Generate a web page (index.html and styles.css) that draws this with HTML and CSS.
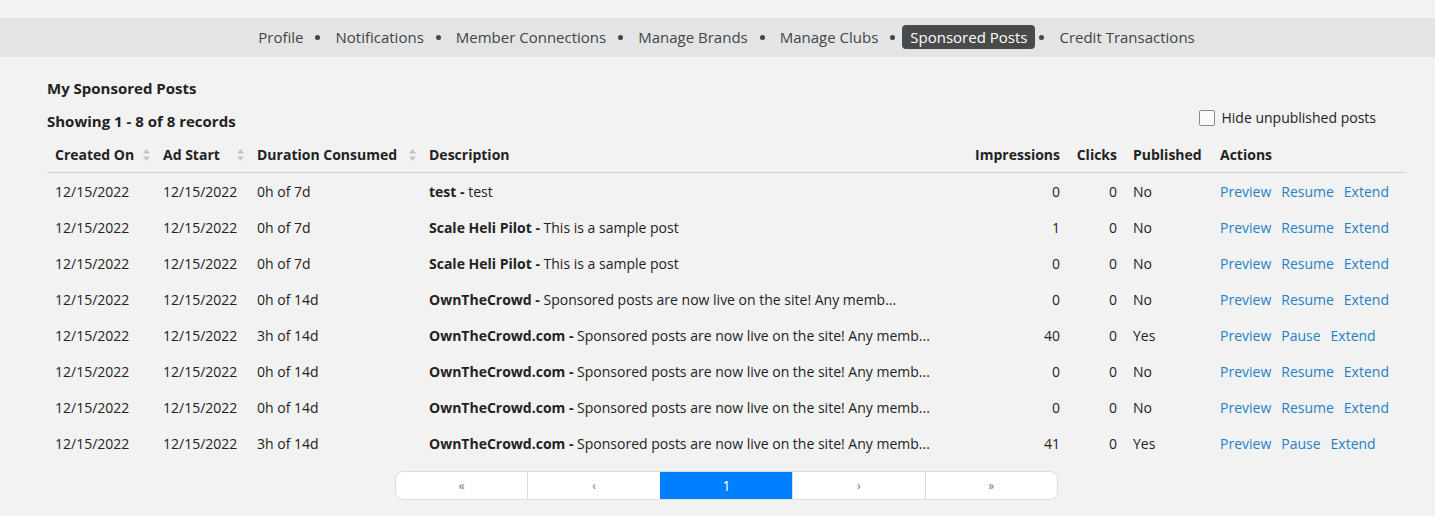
FILE: index.html
```html
<html>
<head>
  <meta charset="UTF-8">
  <title>Sponsored Posts</title>
  <link rel="stylesheet" href="styles.css">
</head>
<body>

  <nav class="subnav">
    <a href="#">Profile</a><span class="dot"></span>
    <a href="#">Notifications</a><span class="dot"></span>
    <a href="#">Member Connections</a><span class="dot"></span>
    <a href="#">Manage Brands</a><span class="dot"></span>
    <a href="#">Manage Clubs</a><span class="dot"></span>
    <a href="#" class="active">Sponsored Posts</a><span class="dot"></span>
    <a href="#">Credit Transactions</a>
  </nav>

  <div class="content">
    <h3>My Sponsored Posts</h3>

    <div class="toolbar">
      <div class="count">Showing 1 - 8 of 8 records</div>
      <label class="hide-toggle"><span class="box"></span>Hide unpublished posts</label>
    </div>

    <table class="posts">
      <colgroup>
        <col style="width:108px"><col style="width:94px"><col style="width:172px"><col style="width:546px">
        <col style="width:101px"><col style="width:57px"><col style="width:87px"><col style="width:193px">
      </colgroup>
      <thead>
        <tr>
          <th class="sortable"><div>Created On <svg width="7" height="12" viewBox="0 0 7 12"><path d="M3.5 0L7 4.5H0z M3.5 12L0 7.5H7z" fill="#c4c4c4"/></svg></div></th>
          <th class="sortable"><div>Ad Start <svg width="7" height="12" viewBox="0 0 7 12"><path d="M3.5 0L7 4.5H0z M3.5 12L0 7.5H7z" fill="#c4c4c4"/></svg></div></th>
          <th class="sortable"><div>Duration Consumed <svg width="7" height="12" viewBox="0 0 7 12"><path d="M3.5 0L7 4.5H0z M3.5 12L0 7.5H7z" fill="#c4c4c4"/></svg></div></th>
          <th>Description</th>
          <th class="num">Impressions</th>
          <th class="num">Clicks</th>
          <th>Published</th>
          <th>Actions</th>
        </tr>
      </thead>
      <tbody id="postsBody"></tbody>
    </table>

    <div class="pager">
      <a href="#">&laquo;</a>
      <a href="#">&lsaquo;</a>
      <a href="#" class="current">1</a>
      <a href="#">&rsaquo;</a>
      <a href="#">&raquo;</a>
    </div>
  </div>

  <script>
    var sample = "Sponsored posts are now live on the site! Any memb...";
    var posts = [
      ["0h of 7d", "test", "test", 0, "No"],
      ["0h of 7d", "Scale Heli Pilot", "This is a sample post", 1, "No"],
      ["0h of 7d", "Scale Heli Pilot", "This is a sample post", 0, "No"],
      ["0h of 14d", "OwnTheCrowd", sample, 0, "No"],
      ["3h of 14d", "OwnTheCrowd.com", sample, 40, "Yes"],
      ["0h of 14d", "OwnTheCrowd.com", sample, 0, "No"],
      ["0h of 14d", "OwnTheCrowd.com", sample, 0, "No"],
      ["3h of 14d", "OwnTheCrowd.com", sample, 41, "Yes"]
    ];
    var body = document.getElementById("postsBody");
    posts.forEach(function (p) {
      var row = document.createElement("tr");
      var toggle = p[4] === "Yes" ? "Pause" : "Resume";
      row.innerHTML = `
        <td>12/15/2022</td>
        <td>12/15/2022</td>
        <td>${p[0]}</td>
        <td class="desc"><b>${p[1]} -</b> ${p[2]}</td>
        <td class="num">${p[3]}</td>
        <td class="num">0</td>
        <td>${p[4]}</td>
        <td class="actions"><a href="#">Preview</a><a href="#">${toggle}</a><a href="#">Extend</a></td>`;
      body.appendChild(row);
    });
  </script>
</body>
</html>
```

FILE: styles.css
```css
body {
  margin: 0;
  background: #f2f2f2;
  font-family: "Open Sans", Arial, sans-serif;
  font-size: 14px;
  color: #222;
}
a {
  text-decoration: none;
}
.subnav {
  margin-top: 18px;
  height: 39px;
  padding-left: 18px;
  background: #e3e4e5;
  display: flex;
  align-items: center;
  justify-content: center;
}
.subnav a {
  color: #444;
  font-size: 15px;
  line-height: 24px;
  padding: 0 8px;
  border-radius: 4px;
  margin-top: -1px;
}
.subnav a.active {
  background: #4a4a4a;
  color: #fff;
}
.dot {
  width: 5px;
  height: 5px;
  border-radius: 50%;
  background: #444;
  margin: 0 7px 0 4px;
}
.content {
  margin: 0 30px 0 47px;
}
h3 {
  font-size: 15px;
  line-height: 20px;
  margin: 21px 0 0;
}
.toolbar {
  display: flex;
  justify-content: space-between;
  align-items: flex-start;
  margin-top: 10px;
}
.count {
  font-size: 15px;
  font-weight: bold;
  line-height: 20px;
  margin-top: 3px;
}
.hide-toggle {
  display: flex;
  align-items: center;
  line-height: 20px;
  margin-right: 29px;
  color: #222;
}
.hide-toggle .box {
  width: 14px;
  height: 14px;
  border: 1px solid #8a8a8a;
  border-radius: 2px;
  background: #fafafa;
  margin-right: 6px;
}
.posts {
  width: 100%;
  table-layout: fixed;
  border-collapse: collapse;
  margin-top: 8px;
  font-size: 14px;
  color: #222;
}
.posts th {
  text-align: left;
  font-weight: bold;
  line-height: 20px;
  padding: 6px 8px 7px;
  border-bottom: 1px solid #cfcfcf;
  white-space: nowrap;
}
.posts th.sortable {
  padding-right: 5px;
}
.posts th.sortable div {
  display: flex;
  justify-content: space-between;
  align-items: center;
}
.posts td {
  line-height: 20px;
  padding: 9px 8px 7px;
  white-space: nowrap;
  overflow: hidden;
}
.posts .num {
  text-align: right;
}
.actions a {
  color: #2481c6;
  margin-right: 10px;
}
.pager {
  width: 661px;
  margin: 10px auto 0 348px;
  display: flex;
  border: 1px solid #dcdcdc;
  border-radius: 8px;
  background: #fff;
  overflow: hidden;
}
.pager a {
  flex: 1;
  text-align: center;
  line-height: 27px;
  font-size: 12px;
  color: #6c757d;
  border-left: 1px solid #dcdcdc;
}
.pager a:first-child {
  border-left: none;
}
.pager a.current {
  background: #0080ff;
  color: #fff;
  font-size: 14px;
  border-left-color: #0080ff;
}
```
